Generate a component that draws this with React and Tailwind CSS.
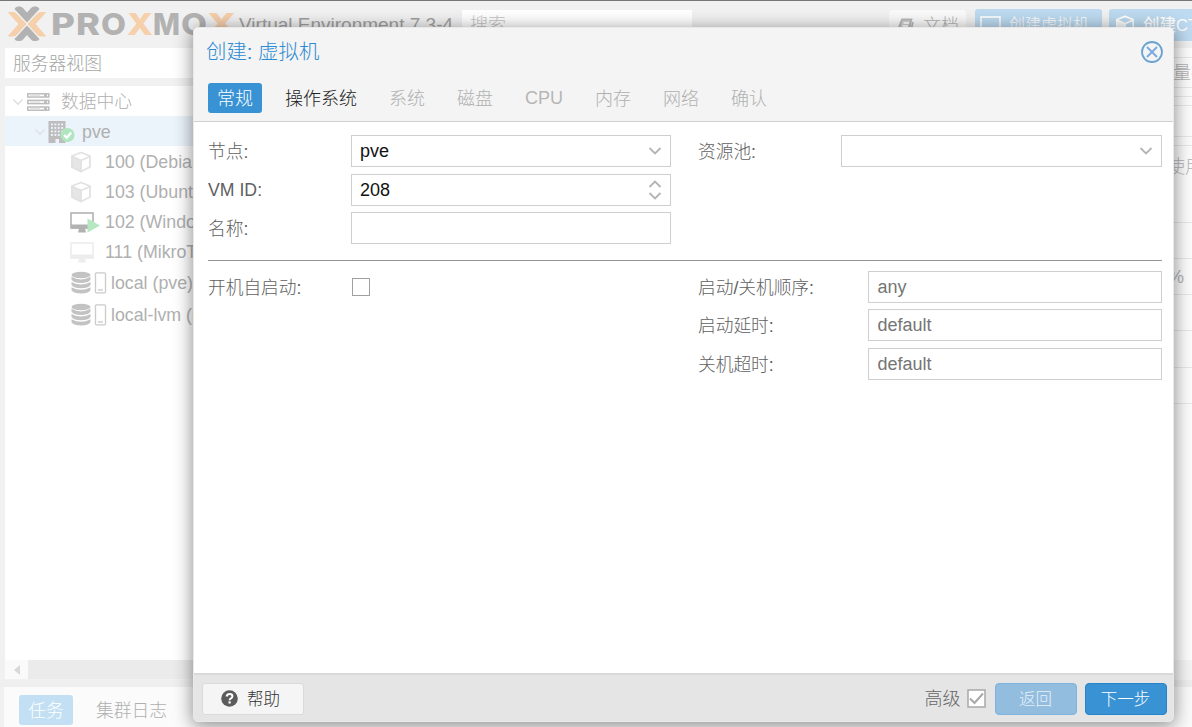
import React from "react";

const logoLetters = [
  ["P", 51, 24, "#b2b2b2"],
  ["R", 76, 24, "#b2b2b2"],
  ["O", 101, 25, "#b2b2b2"],
  ["X", 127, 26, "#f6cfab"],
  ["M", 153, 27, "#b2b2b2"],
  ["O", 181, 26, "#b2b2b2"],
  ["X", 207, 29, "#f6cfab"],
];

function Logo() {
  return (
    <svg width="240" height="47" viewBox="0 0 240 47" className="shrink-0">
      <g strokeLinejoin="round">
        <path d="M8.500 11.500H13Q15 11.500 16.500 13L26 23L16.500 33.500Q15 35 13 35H8.500L19 23Z" fill="#f6cfab" stroke="#f6cfab" />
        <path d="M45.500 11.500H41Q39 11.500 37.500 13L28 23L37.500 33.500Q39 35 41 35H45.500L35 23Z" fill="#f6cfab" stroke="#f6cfab" />
        <path d="M14.500 8Q15.500 5.500 18 5.500H20Q21.500 5.500 23 7L27 11.500L31 7Q32.500 5.500 34 5.500H36Q38.500 5.500 39.500 8L27 21.500Z" fill="#b2b2b2" />
        <path d="M14.500 38Q15.500 40 18 40H20Q21.500 40 23 38.500L27 34L31 38.500Q32.500 40 34 40H36Q38.500 40 39.500 38L27 24.500Z" fill="#b2b2b2" />
      </g>
      {logoLetters.map(([ch, x, w, fill], i) => (
        <text key={i} x={x} y="33.800" textLength={w} lengthAdjust="spacingAndGlyphs" fill={fill} fontSize="30" fontWeight="800" fontFamily="Inter, sans-serif">
          {ch}
        </text>
      ))}
    </svg>
  );
}

function Chevron({ className = "" }) {
  return (
    <svg width="14" height="8" viewBox="0 0 14 8" className={`shrink-0 ${className}`} fill="none" stroke="currentColor" strokeWidth="1.800">
      <path d="M1.500 1L7 6.500L12.500 1" />
    </svg>
  );
}

function ServerIcon() {
  return (
    <svg className="shrink-0" width="23" height="18" viewBox="0 0 23 18" fill="none" stroke="#bcbcbc" strokeWidth="1.500">
      {[0, 6.6, 13.2].map((y) => (
        <g key={y}>
          <rect x="0.800" y={y + 0.800} width="21" height="3.200" />
          <path d={`M3 ${y + 2.400}H13`} stroke="#e2e2e2" />
          <circle cx="18.500" cy={y + 2.400} r="0.800" />
        </g>
      ))}
    </svg>
  );
}

function NodeIcon() {
  return (
    <svg className="shrink-0" width="27" height="24" viewBox="0 0 27 24">
      <path d="M0.500 1H17.500V23H11V19H7.500V23H0.500Z" fill="#bdbdbd" />
      {[3.5, 7, 10.5, 14].map((y) =>
        [3, 6.4, 9.8, 13.2].map((x) => <rect key={`${x}-${y}`} x={x} y={y} width="1.900" height="1.900" fill="#ebf3fb" />)
      )}
      <circle cx="19.500" cy="15" r="7" fill="#b0e6bf" />
      <path d="M16 15L18.800 17.700L23.200 12.500" fill="none" stroke="#fff" strokeWidth="2.400" />
    </svg>
  );
}

function CubeIcon({ color = "#e2e2e2", width = 22 }) {
  return (
    <svg className="shrink-0" width={width} height={width} viewBox="0 0 22 22" fill="none" stroke={color} strokeWidth="1.800" strokeLinejoin="round">
      <path d="M11 1.500L20 5V16L11 20.500L2 16V5Z" />
      <path d="M2 5.500L11 9.500L20 5.500" />
      <path d="M2 5.500L11 9.500V20.500L2 16Z" fill={color} fillOpacity="0.850" />
    </svg>
  );
}

function ScreenIcon({ running }) {
  const c = running ? "#b2b2b2" : "#ededed";
  return (
    <svg className="shrink-0" width="30" height="23" viewBox="0 0 30 23">
      <rect x="1" y="2" width="22" height="15" fill="none" stroke={c} strokeWidth="1.600" />
      <path d="M1 13.500H23V17.500H1Z M9 17.500H15L16 21.500H8Z" fill={c} />
      {running && <path d="M17.500 7.500L30 14.500L17.500 21.500Z" fill="#b5e7c0" />}
    </svg>
  );
}

function StorageIcon() {
  return (
    <svg className="shrink-0" width="37" height="24" viewBox="0 0 37 24">
      <g fill="#c3c3c3">
        <ellipse cx="11" cy="4" rx="9.500" ry="3.200" />
        <path d="M1.500 5.800Q11 11 20.500 5.800V8.800Q18 12 11 12T1.500 8.800Z" />
        <path d="M1.500 11Q11 16.200 20.500 11V14Q18 17.200 11 17.200T1.500 14Z" />
        <path d="M1.500 16.200Q11 21.400 20.500 16.200V19.200Q18 22.500 11 22.500T1.500 19.200Z" />
      </g>
      <rect x="25.500" y="1.800" width="10" height="20" rx="1" fill="none" stroke="#cbcbcb" strokeWidth="1.300" />
      <path d="M28 19H33" stroke="#c3c3c3" strokeWidth="1.200" />
    </svg>
  );
}

function TreeRow({ children, label, className }) {
  return (
    <div className={`flex shrink-0 items-center whitespace-nowrap pt-0.5 text-[#b0b0b0] ${className}`}>
      {children}
      <span>{label}</span>
    </div>
  );
}

function Sidebar() {
  return (
    <div className="flex w-[190px] shrink-0 flex-col overflow-hidden text-[17.800px]">
      <div className="flex h-[30px] shrink-0 items-center bg-white pl-2 pt-0.5 text-[#a5a5a5]">服务器视图</div>
      <div className="mt-2 flex h-[574px] shrink-0 flex-col bg-white">
        <TreeRow label="数据中心" className="h-[30px] gap-[11px] pl-[7px]">
          <div className="flex items-center gap-[3px]">
            <Chevron className="w-3 text-[#e0e0e0]" />
            <ServerIcon />
          </div>
        </TreeRow>
        <TreeRow label="pve" className="h-[30px] gap-[7px] bg-[#ebf3fb] pl-[29px]">
          <div className="flex items-center gap-[2px]">
            <Chevron className="w-3 text-[#dce3ea]" />
            <NodeIcon />
          </div>
        </TreeRow>
        <TreeRow label="100 (Debian)" className="h-[30px] gap-[13px] pl-[65px]"><CubeIcon /></TreeRow>
        <TreeRow label="103 (Ubuntu)" className="h-[30px] gap-[13px] pl-[65px]"><CubeIcon /></TreeRow>
        <TreeRow label="102 (Windows)" className="h-[30px] gap-[5px] pl-[65px]"><ScreenIcon running /></TreeRow>
        <TreeRow label="111 (MikroTik)" className="h-[30px] gap-[5px] pl-[65px]"><ScreenIcon /></TreeRow>
        <TreeRow label="local (pve)" className="h-8 gap-1 pl-[65px]"><StorageIcon /></TreeRow>
        <TreeRow label="local-lvm (pve)" className="h-8 gap-1 pl-[65px]"><StorageIcon /></TreeRow>
      </div>
      <div className="flex h-[19px] shrink-0 bg-[#ebebeb]">
        <div className="flex w-[23px] items-center justify-center bg-[#fafafa]">
          <svg width="6" height="10" viewBox="0 0 6 10"><path d="M6 0V10L0 5Z" fill="#d8d8d8" /></svg>
        </div>
      </div>
    </div>
  );
}

const summaryRows = ["h-[36px]", "h-[36px]", "h-[36px]", "h-[37px]", "h-[36px]"];

function SummaryEdge() {
  return (
    <div className="flex h-[633px] w-[52px] shrink-0 flex-col overflow-hidden whitespace-nowrap bg-[#fdfdfd] text-[#b5b5b5]">
      <div className="h-[10px] shrink-0 border-b border-[#e8e8e8]" />
      <div className="flex h-[30px] shrink-0 items-center border-b border-[#e8e8e8] pl-[15px]">批量操作</div>
      <div className="h-[9px] shrink-0 border-b border-[#e8e8e8]" />
      <div className="h-[9px] shrink-0 border-b border-[#e8e8e8]" />
      <div className="h-[31px] shrink-0 border-b border-[#e8e8e8]" />
      <div className="h-[9px] shrink-0 border-b border-[#e8e8e8]" />
      <div className="h-[77px] shrink-0 border-b border-[#e8e8e8] pl-[27px] pt-[9px]">使用率</div>
      {summaryRows.map((h, i) => (
        <div key={i} className={`${h} flex shrink-0 items-center border-b border-[#e8e8e8] pl-7`}>
          {i === 1 ? "%" : ""}
        </div>
      ))}
      <div className="grow" />
      <div className="h-[21px] shrink-0 bg-[#f5f5f5]" />
    </div>
  );
}

function Background() {
  return (
    <div className="flex h-full flex-col border-t border-[#777] bg-[#f1f1f1]">
      <div className="flex h-[47px] shrink-0 items-start overflow-hidden whitespace-nowrap">
        <Logo />
        <div className="-ml-px mt-[10px] w-[215px] shrink-0 text-[19px] leading-7 text-[#a0a0a0]">Virtual Environment 7.3-4</div>
        <div className="ml-2 mt-[9px] h-7 w-[230px] shrink-0 bg-white pl-2 leading-[30px] text-[#c4c4c4]">搜索</div>
        <div className="ml-[197px] mt-[9px] flex h-8 w-[77px] shrink-0 items-center gap-[9px] rounded-sm bg-[#fafafa] pl-2 text-[#b3b3b3]">
          <svg width="17" height="17" viewBox="0 0 17 17" fill="none" stroke="#b8b8b8" strokeWidth="1.800">
            <path d="M5 1.500H14.500L11.500 12.500H2.500Q1 12.500 1.500 10.500Z" fill="#d0d0d0" />
            <path d="M6.500 5H12M5.500 8H11" stroke="#fafafa" />
            <path d="M16 4L13 15.500H3Q1 15.500 1.500 12.500" />
          </svg>
          文档
        </div>
        <div className="ml-[9px] mt-2 flex h-8 w-[127px] shrink-0 items-center gap-2 rounded-[3px] bg-[#bddaf0] pl-[5px] text-white">
          <svg width="21" height="19" viewBox="0 0 21 19" fill="none" stroke="#fff" strokeWidth="1.600">
            <rect x="1" y="1" width="19" height="14" />
            <path d="M6 18H15" />
          </svg>
          <span className="text-[16px]">创建虚拟机</span>
        </div>
        <div className="ml-[7px] mt-2 flex h-8 w-[96px] shrink-0 items-center gap-[8px] rounded-[3px] bg-[#bddaf0] pl-[6px] text-[16.500px] font-medium text-white">
          <CubeIcon color="#fff" width={20} />
          <span>创建CT</span>
        </div>
      </div>
      <div className="flex h-[632px] shrink-0 justify-between pl-[5px]">
        <Sidebar />
        <SummaryEdge />
      </div>
      <div className="h-[7px] shrink-0 bg-[#efefef]" />
      <div className="ml-1 flex min-h-0 grow items-start gap-[23px] overflow-hidden bg-[#fbfbfb] pl-[15px] pt-2 text-[17.800px] text-[#b0b0b0]">
        <div className="flex h-[30px] w-[54px] items-center justify-center rounded-[3px] bg-[#c2dff3] pt-0.5 text-white">任务</div>
        <div className="flex h-[30px] items-center pt-0.5">集群日志</div>
      </div>
    </div>
  );
}

const disabledTabs = ["系统", "磁盘", "CPU", "内存", "网络", "确认"];

function Field({ label, labelWidth, children, latin }) {
  return (
    <div className="flex h-8 items-center">
      <label className={`${labelWidth} ${latin ? "" : "pt-0.5"} shrink-0 text-[17.700px] text-[#606060]`}>{label}</label>
      {children}
    </div>
  );
}

function Box({ children, className = "text-[#111]" }) {
  return (
    <div className={`flex h-8 min-w-0 grow items-center justify-between border border-[#cfcfcf] bg-white pl-[8.500px] pr-2 ${className}`}>
      {children}
    </div>
  );
}

function Dialog() {
  return (
    <div className="absolute left-[193px] top-[27px] flex h-[695px] w-[981px] flex-col overflow-hidden rounded-[5px] border border-[#e9e9e9] bg-white shadow-[0_3px_18px_1px_rgba(0,0,0,0.440)]">
      <div className="flex h-[94px] shrink-0 flex-col border-b border-[#cfcfcf] bg-[#f4f4f4]">
        <div className="flex h-[46px] items-center justify-between pl-3 pr-[10px] pt-px text-[20.400px] text-[#2d8bd3]">
          <span className="pt-px">创建: 虚拟机</span>
          <svg width="22" height="22" viewBox="0 0 22 22" fill="none">
            <circle cx="11" cy="11" r="10" stroke="#6aa3d1" strokeWidth="1.800" />
            <path d="M6 6L16 16M16 6L6 16" stroke="#78a9dc" strokeWidth="1.800" />
          </svg>
        </div>
        <div className="mt-[9px] flex h-[30px] items-center gap-[32px] pl-[14px]">
          <div className="flex items-center gap-[23px]">
            <div className="flex h-[30px] w-[54px] items-center justify-center rounded-[3px] bg-[#3892d4] pt-0.5 text-white">常规</div>
            <span className="pt-0.5 text-[#222]">操作系统</span>
          </div>
          {disabledTabs.map((t) => (
            <span key={t} className={t === "CPU" ? "text-[#b6b6b6]" : "pt-0.5 text-[#b0b0b0]"}>{t}</span>
          ))}
        </div>
      </div>
      <div className="flex grow flex-col pl-[14px] pr-[11px] pt-[13px]">
        <div className="flex justify-between">
          <div className="flex w-[463px] flex-col gap-[6.500px]">
            <Field label="节点:" labelWidth="w-[142.500px]">
              <Box>pve<Chevron className="text-[#b4b4b4]" /></Box>
            </Field>
            <Field label="VM ID:" labelWidth="w-[142.500px]" latin>
              <Box>
                208
                <div className="flex flex-col gap-1">
                  <Chevron className="rotate-180 text-[#b4b4b4]" />
                  <Chevron className="text-[#b4b4b4]" />
                </div>
              </Box>
            </Field>
            <Field label="名称:" labelWidth="w-[142.500px]"><Box /></Field>
          </div>
          <div className="w-[464px]">
            <Field label="资源池:" labelWidth="w-[143px]">
              <Box><span /><Chevron className="text-[#b4b4b4]" /></Box>
            </Field>
          </div>
        </div>
        <div className="mt-[15.500px] h-px shrink-0 bg-[#959595]" />
        <div className="mt-[10px] flex justify-between">
          <div className="w-[464px]">
            <Field label="开机自启动:" labelWidth="w-[144px]">
              <div className="mt-px size-[18px] border-[1.500px] border-[#a0a0a0]" />
            </Field>
          </div>
          <div className="flex w-[464px] flex-col gap-[6.500px]">
            <Field label="启动/关机顺序:" labelWidth="w-[170px]"><Box className="text-[#757575]">any</Box></Field>
            <Field label="启动延时:" labelWidth="w-[170px]"><Box className="text-[#757575]">default</Box></Field>
            <Field label="关机超时:" labelWidth="w-[170px]"><Box className="text-[#757575]">default</Box></Field>
          </div>
        </div>
      </div>
      <div className="flex h-[48px] shrink-0 items-center justify-between border-t-2 border-[#d9d9d9] bg-[#e5e5e5] pl-2 pr-[6.500px]">
        <div className="mt-px flex h-8 w-[102px] items-center gap-[9px] rounded-[3px] border border-[#dadada] bg-[#f5f5f5] pl-[18px] text-[16.500px] text-[#333]">
          <svg width="17" height="17" viewBox="0 0 17 17">
            <circle cx="8.500" cy="8.500" r="8.300" fill="#5c5c5c" />
            <path d="M5.600 6.500Q6 4 8.600 4Q11.400 4 11.400 6.300Q11.400 7.600 9.900 8.400Q8.600 9.100 8.600 10.200" fill="none" stroke="#fff" strokeWidth="2" />
            <rect x="7.500" y="11.300" width="2.200" height="2.200" fill="#fff" />
          </svg>
          <span className="pt-px">帮助</span>
        </div>
        <div className="mt-px flex items-center text-white">
          <span className="pt-px text-[#666]">高级</span>
          <svg className="ml-[6px]" width="19" height="19" viewBox="0 0 19 19" fill="none" stroke="#a8a8a8">
            <rect x="1" y="1" width="17" height="17" fill="#fff" strokeWidth="1.500" />
            <path d="M3 9.500L7.500 14L16 4.500" strokeWidth="2" />
          </svg>
          <div className="ml-[9px] flex h-8 w-[82px] items-center justify-center rounded-[4px] border border-[#7fb3dc] bg-[#92bddf] pt-px text-[16.500px] text-[#e8f1f8]">返回</div>
          <div className="ml-2 flex h-8 w-[82px] items-center justify-center rounded-[4px] border border-[#2784ca] bg-[#3892d4] pt-px text-[16.500px]">下一步</div>
        </div>
      </div>
    </div>
  );
}

export default function App() {
  return (
    <div className="relative h-[727px] w-[1192px] overflow-hidden font-['Liberation_Sans','Noto_Sans_CJK_SC',sans-serif] text-[18px] font-light leading-6">
      <Background />
      <Dialog />
    </div>
  );
}
